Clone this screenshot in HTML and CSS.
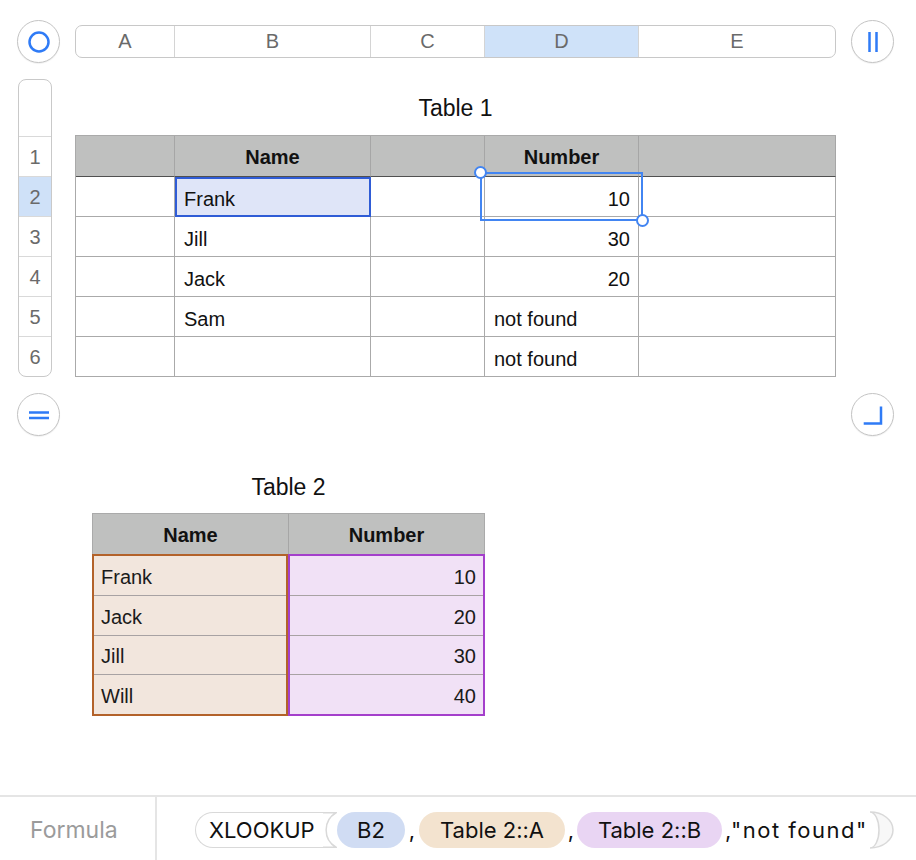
FILE: index.html
```html
<!DOCTYPE html>
<html>
<head>
<meta charset="utf-8">
<title>Numbers XLOOKUP</title>
<link rel="stylesheet" href="styles.css">
</head>
<body>
<div class="app">
  <div class="topbar">
    <div class="cbtn">
      <svg width="24" height="24" viewBox="0 0 24 24"><circle cx="12" cy="12" r="9.5" fill="none" stroke="#2f7bf6" stroke-width="2.5"/></svg>
    </div>
    <div class="colhead">
      <div class="ch">A</div>
      <div class="ch">B</div>
      <div class="ch">C</div>
      <div class="ch sel">D</div>
      <div class="ch">E</div>
    </div>
    <div class="cbtn">
      <svg width="20" height="24" viewBox="0 0 20 24"><path d="M6.5 2V22M13.5 2V22" fill="none" stroke="#2f7bf6" stroke-width="2.5"/></svg>
    </div>
  </div>

  <div class="sheet">
    <div class="rowhead">
      <div class="rh-top"></div>
      <div class="rh">1</div>
      <div class="rh sel">2</div>
      <div class="rh">3</div>
      <div class="rh">4</div>
      <div class="rh">5</div>
      <div class="rh">6</div>
    </div>
    <div class="t1wrap">
      <div class="title t1title">Table 1</div>
      <div class="t1box">
        <div class="t1">
          <div class="c hd"></div>
          <div class="c hd">Name</div>
          <div class="c hd"></div>
          <div class="c hd">Number</div>
          <div class="c hd"></div>

          <div class="c"></div>
          <div class="c active">Frank</div>
          <div class="c"></div>
          <div class="c num">10</div>
          <div class="c"></div>

          <div class="c"></div>
          <div class="c">Jill</div>
          <div class="c"></div>
          <div class="c num">30</div>
          <div class="c"></div>

          <div class="c"></div>
          <div class="c">Jack</div>
          <div class="c"></div>
          <div class="c num">20</div>
          <div class="c"></div>

          <div class="c"></div>
          <div class="c">Sam</div>
          <div class="c"></div>
          <div class="c">not found</div>
          <div class="c"></div>

          <div class="c"></div>
          <div class="c"></div>
          <div class="c"></div>
          <div class="c">not found</div>
          <div class="c"></div>
        </div>
        <div class="selrect"><span class="handle tl"></span><span class="handle br"></span></div>
      </div>
    </div>
  </div>

  <div class="ctrlrow">
    <div class="cbtn">
      <svg width="24" height="24" viewBox="0 0 24 24"><path d="M2 9.5H22M2 15H22" fill="none" stroke="#2f7bf6" stroke-width="2.5"/></svg>
    </div>
    <div class="cbtn">
      <svg width="24" height="24" viewBox="0 0 24 24"><path d="M20 3.5V20.5H2.7" fill="none" stroke="#2f7bf6" stroke-width="2.5"/></svg>
    </div>
  </div>

  <div class="t2wrap">
    <div class="title">Table 2</div>
    <div class="t2">
      <div class="t2head"><div class="h2">Name</div><div class="h2">Number</div></div>
      <div class="t2body">
        <div class="colblock names">
          <div class="r">Frank</div>
          <div class="r">Jack</div>
          <div class="r">Jill</div>
          <div class="r">Will</div>
        </div>
        <div class="colblock nums">
          <div class="r">10</div>
          <div class="r">20</div>
          <div class="r">30</div>
          <div class="r">40</div>
        </div>
      </div>
    </div>
  </div>

  <div class="formula">
    <div class="flabel">Formula</div>
    <div class="ftokens">
      <span class="fn">XLOOKUP</span><svg class="paren-open" width="14" height="36" viewBox="0 0 14 36"><path d="M0 0.75H13A20 20 0 0 0 13 35.25H0" fill="#fff" stroke="#d9d9d9" stroke-width="1.5"/></svg><span class="pill blue">B2</span><span class="comma">,</span><span class="pill tan">Table 2::A</span><span class="comma c2">,</span><span class="pill purple">Table 2::B</span><span class="rest">,"not found"</span><svg class="paren-close" width="28" height="38" viewBox="0 0 28 38"><path d="M2 1A23 18 0 0 1 2 37A9 18 0 0 0 2 1Z" fill="#f8f8f8" stroke="#d9d9d9" stroke-width="1.5"/></svg>
    </div>
  </div>
</div>
</body>
</html>
```
FILE: styles.css
```css
* { box-sizing: border-box; }
html, body { margin: 0; padding: 0; background: #fff; }
body {
  font-family: "Liberation Sans", Arial, sans-serif;
  color: #111;
}
.app {
  width: 916px;
  height: 860px;
  display: flex;
  flex-direction: column;
  overflow: hidden;
}

/* top bar */
.topbar {
  display: flex;
  align-items: center;
  margin-top: 20px;
  padding-left: 17px;
  height: 43px;
}
.cbtn {
  width: 43px;
  height: 43px;
  border-radius: 50%;
  border: 1.5px solid #c4c4c4;
  background: #fff;
  box-shadow: 0 1px 1px rgba(0,0,0,0.06);
  display: flex;
  align-items: center;
  justify-content: center;
  flex: none;
}
.colhead {
  margin: 0 15px;
  width: 761px;
  height: 33px;
  border: 1px solid #c8c8c8;
  border-radius: 7px;
  overflow: hidden;
  display: grid;
  grid-template-columns: 99px 196px 114px 154px 1fr;
}
.ch {
  border-right: 1px solid #d4d4d4;
  text-align: center;
  line-height: 31px;
  font-size: 20px;
  color: #6a6a6a;
}
.ch:last-child { border-right: none; }
.ch.sel { background: #cfe2f9; }

/* sheet */
.sheet {
  display: flex;
  margin-top: 16px;
}
.rowhead {
  margin-left: 18px;
  width: 34px;
  border: 1px solid #c9c9c9;
  border-radius: 8px;
  overflow: hidden;
  background: #fff;
}
.rh-top { height: 56px; }
.rh {
  height: 40px;
  border-top: 1px solid #d9d9d9;
  text-align: center;
  line-height: 40px;
  font-size: 20px;
  color: #6a6a6a;
}
.rh.sel { background: #cfe1f8; }

.t1wrap {
  margin-left: 23px;
  width: 761px;
}
.title {
  font-size: 23px;
  line-height: 28px;
  text-align: center;
  color: #111;
}
.t1title {
  height: 56px;
  padding-top: 15px;
}
.t1box { position: relative; }
.t1 {
  display: grid;
  grid-template-columns: 99px 196px 114px 154px 197px;
  grid-template-rows: 41px repeat(5, 40px);
  border-left: 1px solid #aaaaaa;
  border-top: 1px solid #aaaaaa;
}
.c {
  border-right: 1px solid #aaaaaa;
  border-bottom: 1px solid #aaaaaa;
  font-size: 20px;
  padding: 5px 9px 0 9px;
  display: flex;
  align-items: center;
  white-space: nowrap;
}
.c.hd {
  background: #bfc0bf;
  border-right-color: #a6a6a6;
  border-bottom-color: #505050;
  font-weight: bold;
  justify-content: center;
  padding-top: 3px;
}
.c.num { justify-content: flex-end; padding-right: 8px; }
.c.active {
  background: #dfe5f8;
  outline: 2px solid #2f5cd6;
  outline-offset: -2px;
}
.selrect {
  position: absolute;
  left: 405px;
  top: 37px;
  width: 163px;
  height: 49px;
  border: 2px solid #4285f2;
}
.handle {
  position: absolute;
  width: 13px;
  height: 13px;
  border-radius: 50%;
  background: #fff;
  border: 2px solid #4285f2;
}
.handle.tl { left: -8px; top: -8px; }
.handle.br { right: -8px; bottom: -8px; }

/* controls row */
.ctrlrow {
  display: flex;
  justify-content: space-between;
  padding: 0 22px 0 17px;
  margin-top: 16px;
}

/* table 2 */
.t2wrap {
  margin-left: 92px;
  width: 393px;
  margin-top: 37px;
}
.t2 { margin-top: 12px; }
.t2head {
  display: grid;
  grid-template-columns: 196px 195px;
  height: 41px;
  border: 1px solid #aaaaaa;
  border-bottom: none;
  background: #bfc0bf;
}
.h2 {
  font-weight: bold;
  font-size: 20px;
  display: flex;
  align-items: center;
  justify-content: center;
  padding-top: 3px;
}
.h2:first-child { border-right: 1px solid #a6a6a6; }
.t2body {
  display: flex;
  height: 162px;
}
.colblock {
  display: flex;
  flex-direction: column;
  border: 2px solid;
}
.colblock.names {
  width: 196px;
  background: #f2e6dd;
  border-color: #b3622a;
}
.colblock.nums {
  width: 197px;
  background: #f1e1f6;
  border-color: #a43fcb;
}
.r {
  flex: 1;
  display: flex;
  align-items: center;
  font-size: 20px;
  padding: 4px 7px 0 7px;
  border-top: 1px solid #a8a2a3;
  color: #1a1a1a;
}
.r:first-child { border-top: none; }
.nums .r { justify-content: flex-end; }

/* formula bar */
.formula {
  margin-top: auto;
  height: 65px;
  border-top: 2px solid #e5e5e5;
  display: flex;
  font-family: Inter, "Open Sans", sans-serif;
  font-feature-settings: "calt" 0;
}
.flabel {
  width: 157px;
  border-right: 2px solid #e5e5e5;
  font-size: 23px;
  color: #9b9b9b;
  padding-left: 30px;
  padding-top: 3px;
  display: flex;
  align-items: center;
}
.ftokens {
  display: flex;
  align-items: center;
  padding-left: 38px;
  padding-top: 3px;
  font-size: 22px;
  color: #111;
  white-space: nowrap;
}
.fn {
  height: 36px;
  width: 128px;
  border: 1.5px solid #d9d9d9;
  border-right: none;
  border-radius: 18px 0 0 18px;
  padding-left: 13px;
  display: flex;
  align-items: center;
  background: #fff;
}
.paren-open { display: block; flex: none; }
.pill {
  height: 36px;
  border-radius: 18px;
  display: flex;
  align-items: center;
  justify-content: center;
  flex: none;
}
.pill.blue { width: 68px; background: #d0dcf3; }
.pill.tan { width: 146px; background: #f3e3cf; }
.pill.purple { width: 145px; background: #e9d5f3; }
.comma {
  width: 14px;
  text-align: center;
}
.comma.c2 { width: 12px; }
.rest {
  margin-left: 3px;
  letter-spacing: 1.5px;
}
.paren-close { display: block; flex: none; margin-left: 0; }
```
